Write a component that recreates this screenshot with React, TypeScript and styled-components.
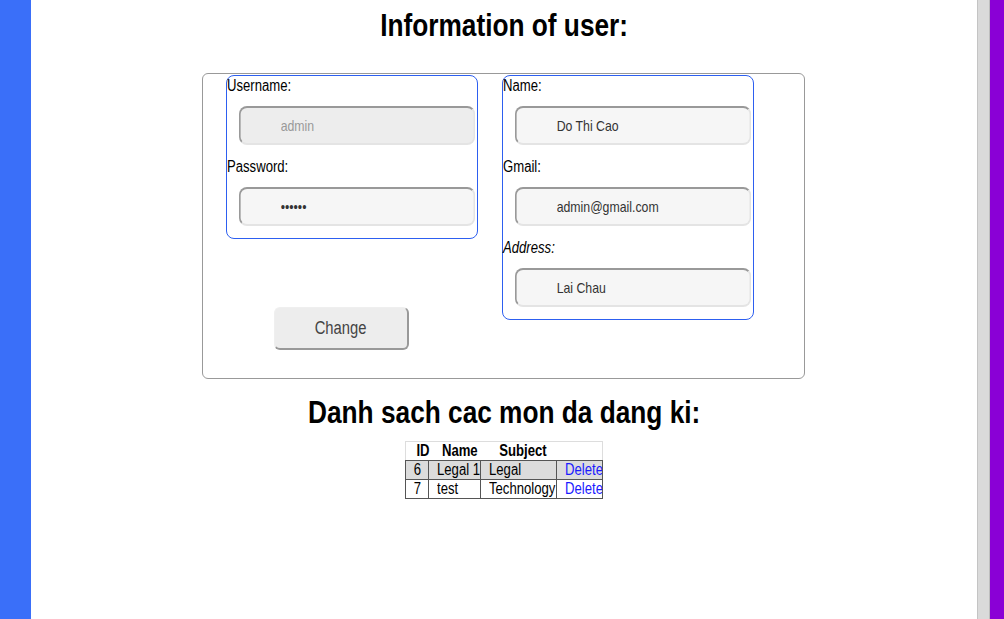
import styled, { createGlobalStyle } from "styled-components";

const GlobalStyle = createGlobalStyle`
  html, body {
    margin: 0;
    padding: 0;
    height: 100%;
    overflow: hidden;
  }
  body {
    font-family: "Liberation Sans", Arial, sans-serif;
    color: #000;
  }
`;

type Field = {
  label: string;
  value: string;
  type?: string;
  disabled?: boolean;
  italic?: boolean;
};

const accountFields: Field[] = [
  { label: "Username:", value: "admin", disabled: true },
  { label: "Password:", value: "123456", type: "password" },
];

const profileFields: Field[] = [
  { label: "Name:", value: "Do Thi Cao" },
  { label: "Gmail:", value: "admin@gmail.com" },
  { label: "Address:", value: "Lai Chau", italic: true },
];

const subjects = [
  { id: 6, name: "Legal 1", subject: "Legal" },
  { id: 7, name: "test", subject: "Technology" },
];

export default function App() {
  return (
    <>
      <GlobalStyle />
      <StyledPage>
        <SideStrip color="#3a6ff9" width={31} />
        <Main>
          <Title>
            <Narrow origin="center">Information of user:</Narrow>
          </Title>
          <InfoCard>
            <LeftColumn>
              <FieldBox>
                {accountFields.map((f) => (
                  <FieldRow key={f.label} field={f} />
                ))}
              </FieldBox>
              <ChangeButton>
                <Narrow origin="center">Change</Narrow>
              </ChangeButton>
            </LeftColumn>
            <FieldBox>
              {profileFields.map((f) => (
                <FieldRow key={f.label} field={f} />
              ))}
            </FieldBox>
          </InfoCard>

          <SubTitle>
            <Narrow origin="center">Danh sach cac mon da dang ki:</Narrow>
          </SubTitle>
          <SubjectTable>
            <colgroup>
              <col style={{ width: 23 }} />
              <col style={{ width: 52 }} />
              <col style={{ width: 76 }} />
              <col style={{ width: 46 }} />
            </colgroup>
            <thead>
              <tr>
                <th><Narrow origin="center">ID</Narrow></th>
                <th><Narrow origin="center">Name</Narrow></th>
                <th><Narrow origin="center">Subject</Narrow></th>
                <th></th>
              </tr>
            </thead>
            <tbody>
              {subjects.map((s, idx) => (
                <DataRow key={s.id} shaded={idx === 0}>
                  <td className="id"><Narrow origin="center">{s.id}</Narrow></td>
                  <td><Narrow>{s.name}</Narrow></td>
                  <td><Narrow>{s.subject}</Narrow></td>
                  <td>
                    <DeleteLink href="#"><Narrow>Delete</Narrow></DeleteLink>
                  </td>
                </DataRow>
              ))}
            </tbody>
          </SubjectTable>
        </Main>
        <Scrollbar />
        <SideStrip color="#8a00d6" width={14} />
      </StyledPage>
    </>
  );
}

function FieldRow({ field }: { field: Field }) {
  return (
    <>
      <Label italic={field.italic}>
        <Narrow>{field.label}</Narrow>
      </Label>
      <TextInput
        type={field.type ?? "text"}
        defaultValue={field.value}
        disabled={field.disabled}
        readOnly
      />
    </>
  );
}

// no narrow face installed, so squeeze Liberation Sans to an Arial Narrow width
const NARROW = 0.82;

const Narrow = styled.span<{ origin?: string }>`
  display: inline-block;
  white-space: nowrap;
  transform: scaleX(${NARROW});
  transform-origin: ${(p) => p.origin ?? "left"} center;
`;

const StyledPage = styled.div`
  display: flex;
  height: 100vh;
  width: 100vw;
`;

const SideStrip = styled.div<{ color: string; width: number }>`
  flex: 0 0 ${(p) => p.width}px;
  background: ${(p) => p.color};
`;

const Main = styled.div`
  flex: 1;
  background: #fff;
  display: flex;
  flex-direction: column;
  align-items: center;
`;

const Scrollbar = styled.div`
  flex: 0 0 13px;
  box-sizing: border-box;
  background: #dadada;
  border-left: 1px solid #c4c4c4;
  border-right: 1px solid #bdbdbd;
`;

const Title = styled.h1`
  margin: 5px 0 28px;
  font-size: 32px;
  line-height: 40px;
  font-weight: bold;
`;

const SubTitle = styled(Title)`
  margin: 13px 0 9px;
`;

const InfoCard = styled.div`
  box-sizing: border-box;
  width: 603px;
  margin-left: -1px;
  border: 1px solid #999;
  border-radius: 6px;
  padding: 1px 0 0 23px;
  display: flex;
  align-items: flex-start;
  gap: 24px;
`;

const LeftColumn = styled.div`
  display: flex;
  flex-direction: column;
  align-items: flex-start;
  padding-bottom: 28px;
`;

const FieldBox = styled.div`
  box-sizing: border-box;
  width: 252px;
  border: 1px solid #2d5ff0;
  border-radius: 8px;
  display: flex;
  flex-direction: column;
  align-items: flex-start;
`;

const Label = styled.label<{ italic?: boolean }>`
  font-size: 16px;
  line-height: 19px;
  font-style: ${(p) => (p.italic ? "italic" : "normal")};
`;

/* the field is drawn wider and squeezed back to 236px, so its text gets the narrow look too */
const TextInput = styled.input`
  box-sizing: border-box;
  flex: none;
  width: ${236 / NARROW}px;
  height: 39px;
  margin: 11px -50px 12px 12px;
  padding: 0 0 0 ${40 / NARROW}px;
  transform: scaleX(${NARROW});
  transform-origin: left center;
  border-style: solid;
  border-width: 2px 2.4px;
  border-color: #999 #e4e4e4 #e4e4e4 #999;
  border-radius: ${8 / NARROW}px / 8px;
  background: #f6f6f6;
  font-family: "Liberation Sans", Arial, sans-serif;
  font-size: 15px;
  color: #333;
  outline: none;

  &:disabled {
    background: #ededed;
    color: #999;
  }
`;

const ChangeButton = styled.button`
  box-sizing: border-box;
  width: 135px;
  height: 43px;
  margin: 68px 0 0 48px;
  border-style: solid;
  border-width: 1px 2px 2px 1px;
  border-color: #efefef #999 #999 #efefef;
  border-radius: 6px;
  background: #ededed;
  font-family: "Liberation Sans", Arial, sans-serif;
  font-size: 18px;
  color: #444;
  cursor: pointer;
`;

const SubjectTable = styled.table`
  width: 197px;
  table-layout: fixed;
  border-collapse: collapse;
  font-size: 16px;
  line-height: 18px;

  thead tr {
    border: 1px solid #ddd;
  }

  th {
    padding: 0 0 0 9px;
    font-weight: bold;
    text-align: center;
    white-space: nowrap;
  }

  td {
    border: 1px solid #555;
    padding: 0 0 0 8px;
    white-space: nowrap;
    overflow: hidden;
  }

  td.id {
    padding: 0;
    text-align: center;
  }
`;

const DataRow = styled.tr<{ shaded: boolean }>`
  background: ${(p) => (p.shaded ? "#dcdcdc" : "#fff")};
`;

const DeleteLink = styled.a`
  color: #1a1aff;
  text-decoration: none;
`;
